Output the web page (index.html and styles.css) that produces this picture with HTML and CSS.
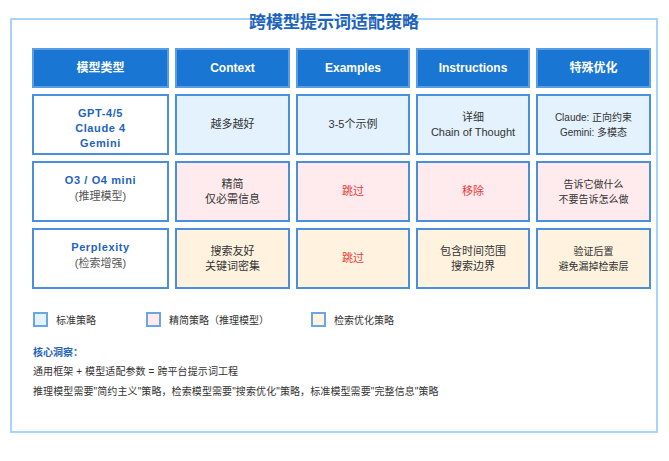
FILE: index.html
```html
<!DOCTYPE html>
<html lang="zh">
<head>
<meta charset="utf-8">
<title>跨模型提示词适配策略</title>
<link rel="stylesheet" href="styles.css">
</head>
<body>
<div class="frame">
  <h1 class="title">跨模型提示词适配策略</h1>
  <div class="grid">
    <div class="cell head">模型类型</div>
    <div class="cell head">Context</div>
    <div class="cell head">Examples</div>
    <div class="cell head">Instructions</div>
    <div class="cell head">特殊优化</div>

    <div class="cell model first"><span class="name">GPT-4/5<br>Claude 4<br>Gemini</span></div>
    <div class="cell std">越多越好</div>
    <div class="cell std">3-5个示例</div>
    <div class="cell std">详细<br>Chain of Thought</div>
    <div class="cell std small">Claude: 正向约束<br>Gemini: 多模态</div>

    <div class="cell model raised"><span class="name">O3 / O4 mini</span><span class="sub">(推理模型)</span></div>
    <div class="cell lean">精简<br>仅必需信息</div>
    <div class="cell lean red">跳过</div>
    <div class="cell lean red">移除</div>
    <div class="cell lean small">告诉它做什么<br>不要告诉怎么做</div>

    <div class="cell model raised"><span class="name">Perplexity</span><span class="sub">(检索增强)</span></div>
    <div class="cell search">搜索友好<br>关键词密集</div>
    <div class="cell search red">跳过</div>
    <div class="cell search">包含时间范围<br>搜索边界</div>
    <div class="cell search small">验证后置<br>避免漏掉检索层</div>
  </div>

  <div class="legend">
    <div class="item"><span class="swatch std"></span>标准策略</div>
    <div class="item"><span class="swatch lean"></span>精简策略（推理模型）</div>
    <div class="item"><span class="swatch search"></span>检索优化策略</div>
  </div>

  <div class="insight">
    <div class="insight-title">核心洞察：</div>
    <p>通用框架 + 模型适配参数 = 跨平台提示词工程</p>
    <p>推理模型需要"简约主义"策略，检索模型需要"搜索优化"策略，标准模型需要"完整信息"策略</p>
  </div>
</div>
</body>
</html>
```

FILE: styles.css
```css
* { box-sizing: border-box; }

html, body {
  margin: 0;
  padding: 0;
  background: #ffffff;
}

body {
  font-family: "Liberation Sans", Arial, "Noto Sans CJK SC", sans-serif;
  color: #333333;
  padding: 18px 0 0 10px;
}

.frame {
  position: relative;
  width: 648px;
  height: 415px;
  border: 2px solid #a9d3f7;
  padding: 28px 0 0 20px;
}

.title {
  position: absolute;
  top: -9px;
  left: 0;
  right: 0;
  margin: 0;
  text-align: center;
  font-size: 17px;
  line-height: 20px;
  font-weight: bold;
  color: #1e63bb;
  font-family: "Noto Sans CJK SC", sans-serif;
}

.grid {
  display: grid;
  grid-template-columns: 137px 115px 114px 114px 115px;
  grid-template-rows: 40px 61px 61px 61px;
  gap: 6px;
}

.cell {
  display: flex;
  flex-direction: column;
  align-items: center;
  justify-content: center;
  text-align: center;
  border: 2px solid #4a8fdc;
  font-size: 11px;
  line-height: 15px;
  color: #333333;
  font-family: "Liberation Sans", Arial, "Noto Sans CJK SC", sans-serif;
}

.head {
  background: #1976d2;
  border-color: #5a9de3;
  color: #ffffff;
  font-weight: bold;
  font-size: 12px;
}

.model {
  background: #ffffff;
}

.model.first {
  padding-top: 7px;
}

.model.raised {
  padding-bottom: 6px;
}

.model .name {
  color: #1e63bb;
  font-weight: bold;
  font-size: 11px;
  letter-spacing: 0.6px;
  line-height: 15px;
}

.model .sub {
  color: #555555;
  font-size: 11px;
  line-height: 15px;
  margin-top: 1px;
}

.std { background: #e3f2fd; }
.lean { background: #ffebee; }
.search { background: #fff3e0; }

.red { color: #e53935; }

.small { font-size: 10px; }

.legend {
  display: grid;
  grid-template-columns: 113px 165px auto;
  margin-top: 23px;
  padding-left: 1px;
}

.item {
  display: flex;
  align-items: center;
  gap: 8px;
  font-size: 10px;
  line-height: 15px;
  color: #333333;
  font-family: "Noto Sans CJK SC", sans-serif;
}

.swatch {
  width: 15px;
  height: 15px;
  border: 2px solid #6aa5e4;
  flex: none;
}

.insight {
  margin-top: 18px;
  padding-left: 1px;
  font-family: "Liberation Sans", Arial, "Noto Sans CJK SC", sans-serif;
}

.insight-title {
  font-size: 10px;
  font-weight: bold;
  color: #1e63bb;
  line-height: 15px;
  margin-bottom: 4px;
}

.insight p {
  margin: 0 0 5px 0;
  font-size: 10px;
  line-height: 15px;
  color: #333333;
  letter-spacing: 0.1px;
}
```
